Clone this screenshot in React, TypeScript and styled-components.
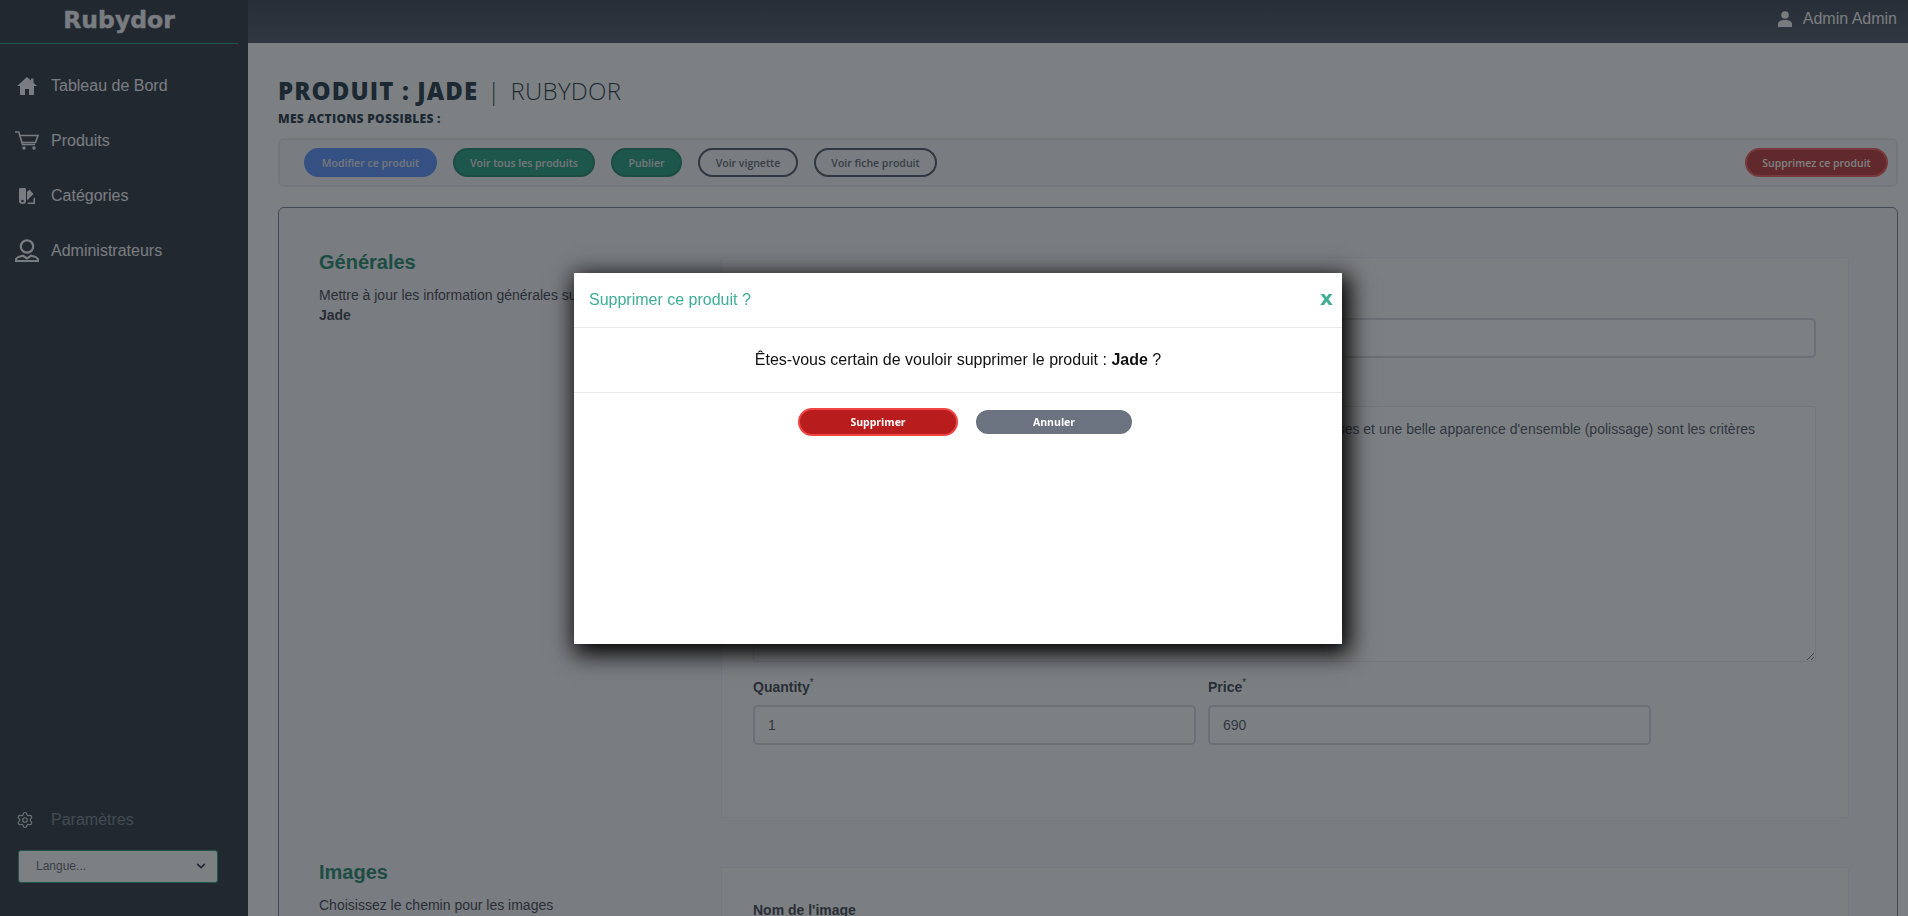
import React from "react";
import styled, { createGlobalStyle } from "styled-components";
import { FaChevronDown } from "react-icons/fa";
import { Settings } from "lucide-react";

const Global = createGlobalStyle`
  html, body { margin: 0; padding: 0; height: 100%; overflow: hidden; background: #fff; }
  body { font-family: "Liberation Sans", Arial, sans-serif; }
  * { box-sizing: border-box; }
`;

const Page = styled.div`
  display: grid;
  grid-template-columns: 248px 1fr;
  width: 1908px;
  height: 916px;
  overflow: hidden;
`;

const Sidebar = styled.aside`
  background: #111827;
  display: flex;
  flex-direction: column;
  height: 916px;
`;

const Logo = styled.div`
  height: 44px;
  margin-right: 10px;
  border-bottom: 1px solid #059669;
  font-family: "DejaVu Sans", sans-serif;
  font-weight: 700;
  font-size: 23.5px;
  line-height: 40px;
  color: #f3f4f6;
  text-align: center;
  -webkit-text-stroke: 0.4px #f3f4f6;
`;

const Nav = styled.nav`
  display: flex;
  flex-direction: column;
  padding-top: 14px;
  flex: 1;
`;

const NavItem = styled.a`
  display: flex;
  align-items: center;
  height: 55px;
  color: #f3f4f6;
  font-size: 16px;
`;

const NavIcon = styled.span`
  width: 24px;
  margin: 0 12px 0 15px;
  display: flex;
  align-items: center;
  justify-content: center;
  color: #f3f4f6;
`;

const SidebarFoot = styled.div`
  display: flex;
  flex-direction: column;
  padding-bottom: 33px;
`;

const SettingsRow = styled.div`
  display: flex;
  align-items: center;
  height: 20px;
  margin-bottom: 20px;
  color: #6b7280;
  font-size: 16px;
`;

const SettingsIcon = styled.span`
  width: 51px;
  padding-left: 16px;
  display: flex;
  color: #d1d5db;
`;

const LangSelect = styled.div`
  margin-left: 18px;
  width: 200px;
  height: 33px;
  background: #fff;
  border: 1px solid #059669;
  border-radius: 3px;
  color: #4b5563;
  font-size: 12px;
  display: flex;
  align-items: center;
  justify-content: space-between;
  padding: 0 11px 2px 17px;
`;

const Main = styled.main`
  display: flex;
  flex-direction: column;
  min-width: 0;
`;

const TopBar = styled.header`
  height: 43px;
  background: linear-gradient(180deg, #1f2937, #374151);
  display: flex;
  align-items: center;
  justify-content: flex-end;
  gap: 11px;
  padding: 0 11px 5px 0;
  color: #f3f4f6;
  font-size: 16px;
`;

const Content = styled.div`
  padding: 34px 10px 0 30px;
  display: flex;
  flex-direction: column;
`;

const Title = styled.h1`
  margin: 0;
  font-family: "Open Sans", sans-serif;
  font-size: 24px;
  line-height: 28px;
  font-weight: 800;
  letter-spacing: 1.1px;
  color: #00182c;
  display: flex;
  align-items: center;
`;

const TitleSep = styled.span`
  font-weight: 300;
  margin: 0 9px 0 9px;
`;

const TitleLight = styled.span`
  font-weight: 300;
  font-size: 24px;
  letter-spacing: 0.3px;
`;

const ActionsLabel = styled.div`
  margin-top: 5px;
  font-family: "Open Sans", sans-serif;
  font-size: 12px;
  line-height: 17px;
  font-weight: 800;
  letter-spacing: 0.3px;
  color: #00182c;
`;

const Toolbar = styled.div`
  margin-top: 11px;
  height: 49px;
  width: 1620px;
  background: #f3f4f6;
  border: 2px solid #e5e7eb;
  border-radius: 6px;
  display: flex;
  align-items: center;
  padding: 0 8px 0 24px;
  gap: 16px;
`;

const tones = {
  blue: "background:#4285ff;border-color:#4285ff;color:#e5e7eb;",
  green: "background:#05906a;border-color:#047857;color:#e5e7eb;",
  outline: "background:transparent;border-color:#374151;color:#4b5563;",
  red: "background:#b91c1c;border-color:#ef4444;color:#fff;",
  gray: "background:#6b7280;border-color:#6b7280;color:#fff;",
};

const Pill = styled.button<{ $tone: keyof typeof tones; $w: number; $h?: number; $push?: boolean; $bold?: boolean }>`
  ${(p) => tones[p.$tone]}
  width: ${(p) => p.$w}px;
  height: ${(p) => p.$h ?? 29}px;
  border-width: 2px;
  border-style: solid;
  border-radius: 15px;
  padding: 0;
  font-family: "Open Sans", sans-serif;
  font-size: 10.5px;
  font-weight: ${(p) => (p.$bold ? 700 : 600)};
  flex: none;
  ${(p) => (p.$push ? "margin-left: auto;" : "")}
`;

const Card = styled.section`
  margin-top: 20px;
  width: 1620px;
  background: #f3f4f6;
  border: 1px solid #6b7280;
  border-radius: 6px;
  padding: 49px 48px 0 40px;
  display: flex;
  flex-direction: column;
  gap: 49px;
`;

const Group = styled.div`
  display: grid;
  grid-template-columns: 402px 1fr;
`;

const GroupIntro = styled.div`
  margin-top: -7px;
`;

const GroupTitle = styled.h2`
  margin: 0;
  color: #047857;
  font-size: 20px;
  line-height: 24px;
  font-weight: 700;
`;

const GroupText = styled.p`
  margin: 11px 0 0;
  font-size: 14px;
  line-height: 20px;
  color: #1f2937;
  width: 400px;
`;

const Panel = styled.div<{ $h: number }>`
  height: ${(p) => p.$h}px;
  background: #fdfdfd;
  border: 1px solid #e9ebee;
  border-radius: 3px;
  padding: 0 32px 0 31px;
  display: flex;
  flex-direction: column;
`;

const FieldLabel = styled.label<{ $top?: number }>`
  display: block;
  font-size: 14px;
  line-height: 16px;
  font-weight: 700;
  color: #1f2937;
  margin-top: ${(p) => p.$top ?? 0}px;
`;

const Req = styled.sup`
  font-size: 10px;
  font-weight: 400;
  line-height: 0;
`;

const TextInput = styled.input<{ $w?: number; $gap?: number }>`
  display: block;
  width: ${(p) => (p.$w ? `${p.$w}px` : "100%")};
  height: 40px;
  margin-top: ${(p) => p.$gap ?? 8}px;
  border: 2px solid #d1d5db;
  border-radius: 5px;
  background: #fff;
  padding: 0 13px;
  font-family: "Liberation Sans", sans-serif;
  font-size: 14px;
  color: #374151;
`;

const TextArea = styled.textarea`
  display: block;
  width: 100%;
  height: 256px;
  margin-top: 8px;
  border: 1px solid #e5e7eb;
  border-radius: 3px;
  background: #fff;
  padding: 12px 16px;
  font-family: "Liberation Sans", sans-serif;
  font-size: 14px;
  line-height: 20px;
  color: #374151;
`;

const FieldRow = styled.div`
  display: flex;
  gap: 12px;
  margin-top: 17px;
`;

const Overlay = styled.div`
  position: fixed;
  inset: 0;
  background: rgba(45, 50, 55, 0.62);
`;

const Modal = styled.div`
  position: absolute;
  left: 574px;
  top: 273px;
  width: 768px;
  height: 371px;
  background: #fff;
  box-shadow: 4px 6px 22px 4px #000;
  display: flex;
  flex-direction: column;
`;

const ModalHead = styled.div`
  height: 55px;
  border-bottom: 1px solid #e8e8e8;
  display: flex;
  align-items: center;
  justify-content: space-between;
  padding: 0 9px 0 15px;
  color: #3fae96;
  font-size: 16px;
`;

const CloseX = styled.span`
  font-family: "DejaVu Sans", sans-serif;
  font-weight: 700;
  font-size: 20px;
  line-height: 20px;
  margin-top: -4px;
`;

const ModalBody = styled.div`
  height: 65px;
  border-bottom: 1px solid #e8e8e8;
  display: flex;
  align-items: center;
  justify-content: center;
  font-size: 16px;
  color: #111;
`;

const ModalActions = styled.div`
  display: flex;
  justify-content: center;
  align-items: center;
  gap: 18px;
  height: 28px;
  margin-top: 15px;
  padding-left: 14px;
`;

const HomeIcon = () => (
  <svg width="20" height="18" viewBox="0 0 20 18" fill="currentColor">
    <path d="M10 0 14 3.500V1.500H16.500V5.700L20 9H17V18H12V12H8V18H3V9H0Z" />
  </svg>
);

const CartIcon = () => (
  <svg width="24" height="19" viewBox="0 0 24 19" fill="none" stroke="currentColor" strokeWidth="1.600">
    <path d="M0 1H3.800L7.500 13.500H20" />
    <path d="M4.800 4.500H23L20.500 11.500H6.800" />
    <circle cx="9" cy="17" r="1.700" fill="currentColor" stroke="none" />
    <circle cx="19" cy="17" r="1.700" fill="currentColor" stroke="none" />
  </svg>
);

const SwatchIcon = () => (
  <svg width="16" height="16" viewBox="0 0 16 16" fill="currentColor">
    <path fillRule="evenodd" d="M1 0H6Q7 0 7 1V13Q7 16 3.500 16T0 13V1Q0 0 1 0ZM3.500 11.700A1.300 1.300 0 1 0 3.501 11.700Z" />
    <path d="M8 4 10.500 1.500 14.500 6 8 12.500Z" />
    <path d="M15 9.500 16 10V16H8L9.500 14.500H14.500V11Z" />
  </svg>
);

const ManagerIcon = () => (
  <svg width="24" height="23" viewBox="0 0 24 23" fill="none" stroke="currentColor" strokeWidth="2.200">
    <circle cx="12" cy="7.500" r="6.200" />
    <path d="M1 22V20.500C1 19 5 17.500 8 16.800L12 19.500 16 16.800C19 17.500 23 19 23 20.500V22Z" />
  </svg>
);

const PersonIcon = () => (
  <svg width="14" height="16" viewBox="0 0 14 16" fill="currentColor">
    <circle cx="7" cy="4" r="3.800" />
    <path d="M0 16v-3c0-2.500 3-4 7-4s7 1.500 7 4v3z" />
  </svg>
);

export default function App() {
  return (
    <>
      <Global />
      <Page>
        <Sidebar>
          <Logo>Rubydor</Logo>
          <Nav>
            <NavItem><NavIcon><HomeIcon /></NavIcon>Tableau de Bord</NavItem>
            <NavItem><NavIcon><CartIcon /></NavIcon>Produits</NavItem>
            <NavItem><NavIcon><SwatchIcon /></NavIcon>Catégories</NavItem>
            <NavItem><NavIcon><ManagerIcon /></NavIcon>Administrateurs</NavItem>
          </Nav>
          <SidebarFoot>
            <SettingsRow><SettingsIcon><Settings size={18} strokeWidth={1.6} /></SettingsIcon>Paramètres</SettingsRow>
            <LangSelect>Langue...<FaChevronDown size={10} color="#111827" /></LangSelect>
          </SidebarFoot>
        </Sidebar>
        <Main>
          <TopBar><PersonIcon />Admin Admin</TopBar>
          <Content>
            <Title>PRODUIT : JADE<TitleSep>|</TitleSep><TitleLight>RUBYDOR</TitleLight></Title>
            <ActionsLabel>MES ACTIONS POSSIBLES :</ActionsLabel>
            <Toolbar>
              <Pill $tone="blue" $w={133}>Modifier ce produit</Pill>
              <Pill $tone="green" $w={142}>Voir tous les produits</Pill>
              <Pill $tone="green" $w={71}>Publier</Pill>
              <Pill $tone="outline" $w={100}>Voir vignette</Pill>
              <Pill $tone="outline" $w={123}>Voir fiche produit</Pill>
              <Pill $tone="red" $w={143} $push>Supprimez ce produit</Pill>
            </Toolbar>
            <Card>
              <Group>
                <GroupIntro>
                  <GroupTitle>Générales</GroupTitle>
                  <GroupText>Mettre à jour les information générales sur le produit<br /><b>Jade</b></GroupText>
                </GroupIntro>
                <Panel $h={561}>
                  <FieldLabel $top={36}>Nom du produit</FieldLabel>
                  <TextInput defaultValue="Jade" />
                  <FieldLabel $top={24}>Description</FieldLabel>
                  <TextArea defaultValue="Une jolie couleur verte bien uniforme, peu d'inclusions visibles, des fissures si peu nombreuses et une belle apparence d'ensemble (polissage) sont les critères" />
                  <FieldRow>
                    <div>
                      <FieldLabel>Quantity<Req>*</Req></FieldLabel>
                      <TextInput $w={443} $gap={10} defaultValue="1" />
                    </div>
                    <div>
                      <FieldLabel>Price<Req>*</Req></FieldLabel>
                      <TextInput $w={443} $gap={10} defaultValue="690" />
                    </div>
                  </FieldRow>
                </Panel>
              </Group>
              <Group>
                <GroupIntro>
                  <GroupTitle>Images</GroupTitle>
                  <GroupText>Choisissez le chemin pour les images</GroupText>
                </GroupIntro>
                <Panel $h={200}>
                  <FieldLabel $top={34}>Nom de l'image</FieldLabel>
                </Panel>
              </Group>
            </Card>
          </Content>
        </Main>
      </Page>
      <Overlay>
        <Modal>
          <ModalHead>Supprimer ce produit ?<CloseX>x</CloseX></ModalHead>
          <ModalBody><span>Êtes-vous certain de vouloir supprimer le produit : <b>Jade</b> ?</span></ModalBody>
          <ModalActions>
            <Pill $tone="red" $w={160} $h={28} $bold>Supprimer</Pill>
            <Pill $tone="gray" $w={156} $h={24} $bold>Annuler</Pill>
          </ModalActions>
        </Modal>
      </Overlay>
    </>
  );
}
